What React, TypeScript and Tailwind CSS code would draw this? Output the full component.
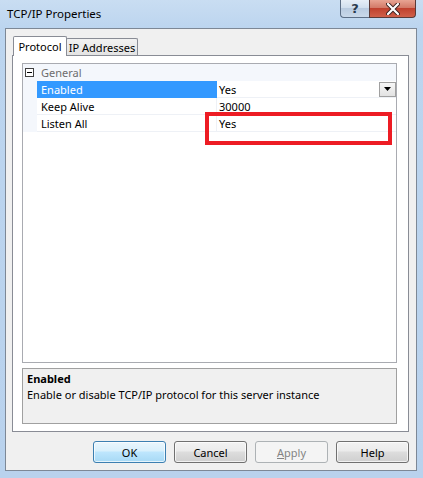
import React from 'react';

const rows = [
  { name: 'Enabled', value: 'Yes', selected: true },
  { name: 'Keep Alive', value: '30000' },
  { name: 'Listen All', value: 'Yes' },
];

function DialogButton({ label, accent, disabled, primary }: { label: string; accent?: boolean; disabled?: boolean; primary?: boolean }) {
  if (primary) {
    return (
      <button className="w-[73px] h-[22px] rounded-[3px] border border-[#3c7fb1] bg-[linear-gradient(#eaf6fd_0%,#d9f0fc_45%,#bee6fd_50%,#a7d9f5_100%)] shadow-[inset_0_0_0_1px_rgba(255,255,255,0.7)] text-black">
        {label}
      </button>
    );
  }
  if (disabled) {
    return (
      <button className="w-[73px] h-[22px] rounded-[3px] border border-[#adb2b5] bg-[#f4f4f4] text-[#838383]">
        <span className="underline">{label[0]}</span>
        {label.slice(1)}
      </button>
    );
  }
  return (
    <button className="w-[73px] h-[22px] rounded-[3px] border border-[#707070] bg-[linear-gradient(#f2f2f2_0%,#ebebeb_45%,#dddddd_50%,#cfcfcf_100%)] shadow-[inset_0_0_0_1px_rgba(255,255,255,0.7)] text-black">
      {accent ? <span className="underline">{label[0]}</span> : label[0]}
      {label.slice(1)}
    </button>
  );
}

export default function App() {
  return (
    <div className="w-[423px] h-[478px] flex flex-col pl-[5px] pr-[6px] pb-[7px] bg-[linear-gradient(#c9ddf2_0px,#bcd5ef_28px,#b9d2ed_100%)] font-['Noto_Sans',sans-serif] text-[11px] leading-none text-black">
      {/* title bar */}
      <div className="h-[28px] flex items-start justify-between">
        <span className="pl-[2px] pt-[8px] text-[11.5px]">TCP/IP Properties</span>
        <div className="flex mr-[1px]">
          <div className="w-[29px] h-[18px] flex items-center justify-center border border-r-0 border-t-0 border-[#5c6e86] rounded-bl-[4px] bg-[linear-gradient(#e6eef7_0%,#d1dfee_45%,#b9cbe0_50%,#c9d8ea_100%)] text-[#2b3a4d] font-bold text-[13px] font-['DejaVu_Sans',sans-serif]">
            ?
          </div>
          <div className="w-[47px] h-[18px] flex items-center justify-center border border-t-0 border-[#5a3a38] rounded-br-[4px] bg-[linear-gradient(#e8a493_0%,#d37a68_45%,#c0412e_50%,#d0604a_100%)]">
            <svg width="14" height="12" viewBox="0 0 14 12">
              <path d="M2 1 L12 11 M12 1 L2 11" stroke="#3b2220" strokeWidth="4" strokeLinecap="round" />
              <path d="M2 1 L12 11 M12 1 L2 11" stroke="#ffffff" strokeWidth="2.2" strokeLinecap="round" />
            </svg>
          </div>
        </div>
      </div>

      {/* client area */}
      <div className="flex-1 flex flex-col border border-[#7d8896] bg-[#f0f0f0] pt-[7px] pl-[6px] pr-[7px] pb-[7px]">
        <div className="h-[19px] flex items-end pl-[1px]">
          <div className="relative z-10 w-[54px] h-[20px] -mb-px flex items-start justify-center pt-[4px] whitespace-nowrap bg-white border border-b-0 border-[#898c95] rounded-t-[2px]">
            Protocol
          </div>
          <div className="w-[72px] h-[17px] -ml-px flex items-start justify-center pt-[3px] whitespace-nowrap border border-b-0 border-[#898c95] rounded-t-[2px] bg-[linear-gradient(#f2f2f2,#e3e3e3)]">
            IP Addresses
          </div>
        </div>

        <div className="flex-1 flex flex-col border border-[#898c95] bg-white pt-[7px] pl-[9px] pr-[11px] pb-[7px]">
          {/* property grid */}
          <div className="relative flex-1 border border-[#a9abb1] bg-white">
            <div className="h-[17px] flex items-center bg-[#f4f7fc]">
              <div className="ml-[2px] w-[9px] h-[9px] border border-[#404040] bg-white flex items-center justify-center">
                <div className="w-[5px] h-px bg-black" />
              </div>
              <span className="ml-[7px] text-[#6d6d6d]">General</span>
            </div>
            {rows.map((r) => (
              <div key={r.name} className="h-[17px] flex">
                <div className="w-[14px] bg-[#f4f7fc]" />
                <div
                  className={
                    r.selected
                      ? 'w-[180px] flex items-center pl-[4px] bg-[#3399ff] text-white border-b border-[#3399ff]'
                      : 'w-[180px] flex items-center pl-[4px] border-b border-r border-[#eef1f6]'
                  }
                >
                  {r.name}
                </div>
                <div className="flex-1 flex items-center justify-between pl-[2px] border-b border-[#eef1f6]">
                  <span>{r.value}</span>
                  {r.selected && (
                    <div className="w-[17px] h-[15px] flex items-center justify-center border border-[#a0a0a0] bg-[linear-gradient(#f7f7f7,#e2e2e2)]">
                      <svg width="7" height="4" viewBox="0 0 7 4">
                        <path d="M0 0 H7 L3.5 4 Z" fill="#000" />
                      </svg>
                    </div>
                  )}
                </div>
              </div>
            ))}
            <div className="absolute left-[182px] top-[48px] w-[187px] h-[33px] border-[4px] border-[#ed1c24]" />
          </div>

          {/* description */}
          <div className="mt-[5px] h-[56px] border border-[#a0a0a0] bg-[#f0f0f0] pl-[4px] pt-[4px] flex flex-col gap-[5px]">
            <span className="font-bold">Enabled</span>
            <span>Enable or disable TCP/IP protocol for this server instance</span>
          </div>
        </div>

        <div className="mt-[9px] flex justify-end gap-[8px]">
          <DialogButton label="OK" primary />
          <DialogButton label="Cancel" />
          <DialogButton label="Apply" disabled />
          <DialogButton label="Help" />
        </div>
      </div>
    </div>
  );
}
